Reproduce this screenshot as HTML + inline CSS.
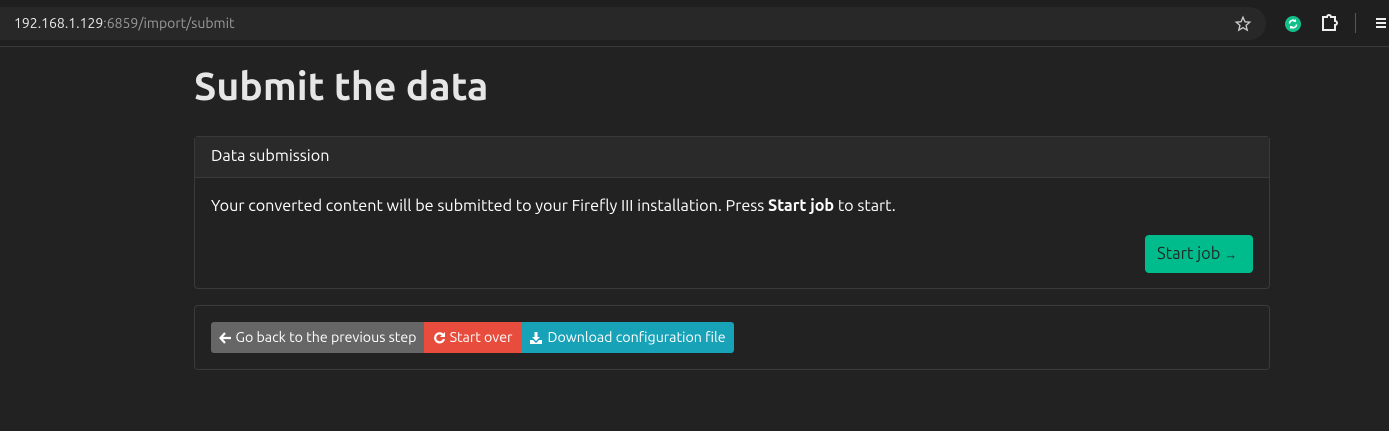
<!DOCTYPE html>
<html><head><style>
*{box-sizing:border-box;margin:0;padding:0}
body{width:1389px;height:431px;background:#222;font-family:"Ubuntu","Liberation Sans",sans-serif;color:#fff;overflow:hidden;position:relative}
.top{position:absolute;left:0;top:0;width:1389px;height:47px;background:#1f1f1f;border-bottom:1px solid #3a3a3a}
.url{position:absolute;left:0;top:7px;width:1266px;height:33px;background:#282828;border-radius:0 17px 17px 0}
.url span{position:absolute;left:14px;top:8px;font-size:14px;color:#e8e8e8}
.url span i{font-style:normal;color:#9a9a9a}
h1{position:absolute;left:194px;top:64px;font-size:39.3px;font-weight:bold;color:#e6e6e6;white-space:nowrap}
.card{position:absolute;left:194px;width:1076px;border:1px solid #3a3a3a;border-radius:4px;background:#222}
.hd{height:41px;background:#2a2a2a;border-bottom:1px solid #3a3a3a;padding:10px 16px;font-size:16.2px}
.bd{padding:20px 16px;font-size:16.2px}
.btn{display:inline-flex;align-items:center;justify-content:center;gap:4px;color:#fff;font-size:14.2px;height:31px;line-height:31px;white-space:nowrap;flex:none}
</style></head><body>
<div class="top"><div class="url"><span>192.168.1.129<i>:6859/import/submit</i></span></div>
<svg style="position:absolute;left:1234px;top:15px" width="18" height="18" viewBox="0 0 24 24"><path d="M12 3l2.6 6 6.4.6-4.9 4.3 1.5 6.3L12 16.9 6.4 20.2l1.5-6.3L3 9.6l6.4-.6z" fill="none" stroke="#ccc" stroke-width="1.8"/></svg>
<svg style="position:absolute;left:1285px;top:16px" width="16" height="16" viewBox="0 0 16 16"><circle cx="8" cy="8" r="8" fill="#14c08a"/><path d="M4.5 7.5a3.5 3.5 0 0 1 6-2.2M11.5 8.5a3.5 3.5 0 0 1-6 2.2" fill="none" stroke="#fff" stroke-width="1.6"/><path d="M11 3v3h-3zM5 13v-3h3z" fill="#fff"/></svg>
<svg style="position:absolute;left:1320px;top:14px" width="18" height="18" viewBox="0 0 18 18"><path d="M3 3h4a2 2 0 0 1 4 0h4v4a2 2 0 0 1 0 4v5H3z" fill="none" stroke="#eee" stroke-width="2"/></svg>
<div style="position:absolute;left:1355px;top:13px;width:1px;height:20px;background:#555"></div>
<div style="position:absolute;left:1376px;top:18px;width:10px;height:2px;background:#eee;box-shadow:0 4px 0 #eee,0 8px 0 #eee"></div>
</div>
<h1>Submit the data</h1>
<div class="card" style="top:136px;height:153px">
<div class="hd">Data submission</div>
<div class="bd" style="padding-top:19px">Your converted content will be submitted to your Firefly III installation. Press <b>Start job</b> to start.</div>
<div style="position:absolute;right:16px;top:98px;width:108px;height:38px;background:#00bc8c;border-radius:4px;color:#1e2a25;font-size:16.5px;line-height:38px;padding-left:12px;white-space:nowrap">Start job <span style="font-size:13px">→</span></div>
</div>
<div class="card" style="top:305px;height:65px">
<div style="position:absolute;left:16px;top:16px;display:flex;border-radius:3px;overflow:hidden;width:523px">
<span class="btn" style="background:#666;width:213px"><svg width="13" height="12" viewBox="0 0 13 12"><path d="M6 1L1.5 6 6 11M2 6h10" fill="none" stroke="#fff" stroke-width="2.2"/></svg>Go back to the previous step</span>
<span class="btn" style="background:#e74c3c;width:97px"><svg width="13" height="13" viewBox="0 0 13 13"><path d="M10.5 4.5A4.5 4.5 0 1 0 11 8" fill="none" stroke="#fff" stroke-width="2.2"/><path d="M12 1v5H7z" fill="#fff"/></svg>Start over</span>
<span class="btn" style="background:#17a2b8;width:213px"><svg width="14" height="14" viewBox="0 0 14 14"><path d="M5.5 1h3v5h2.5L7 10 3 6h2.5z" fill="#fff"/><path d="M1 9h3l3 3 3-3h3v4H1z" fill="#fff"/></svg>Download configuration file</span>
</div></div>
</body></html>
